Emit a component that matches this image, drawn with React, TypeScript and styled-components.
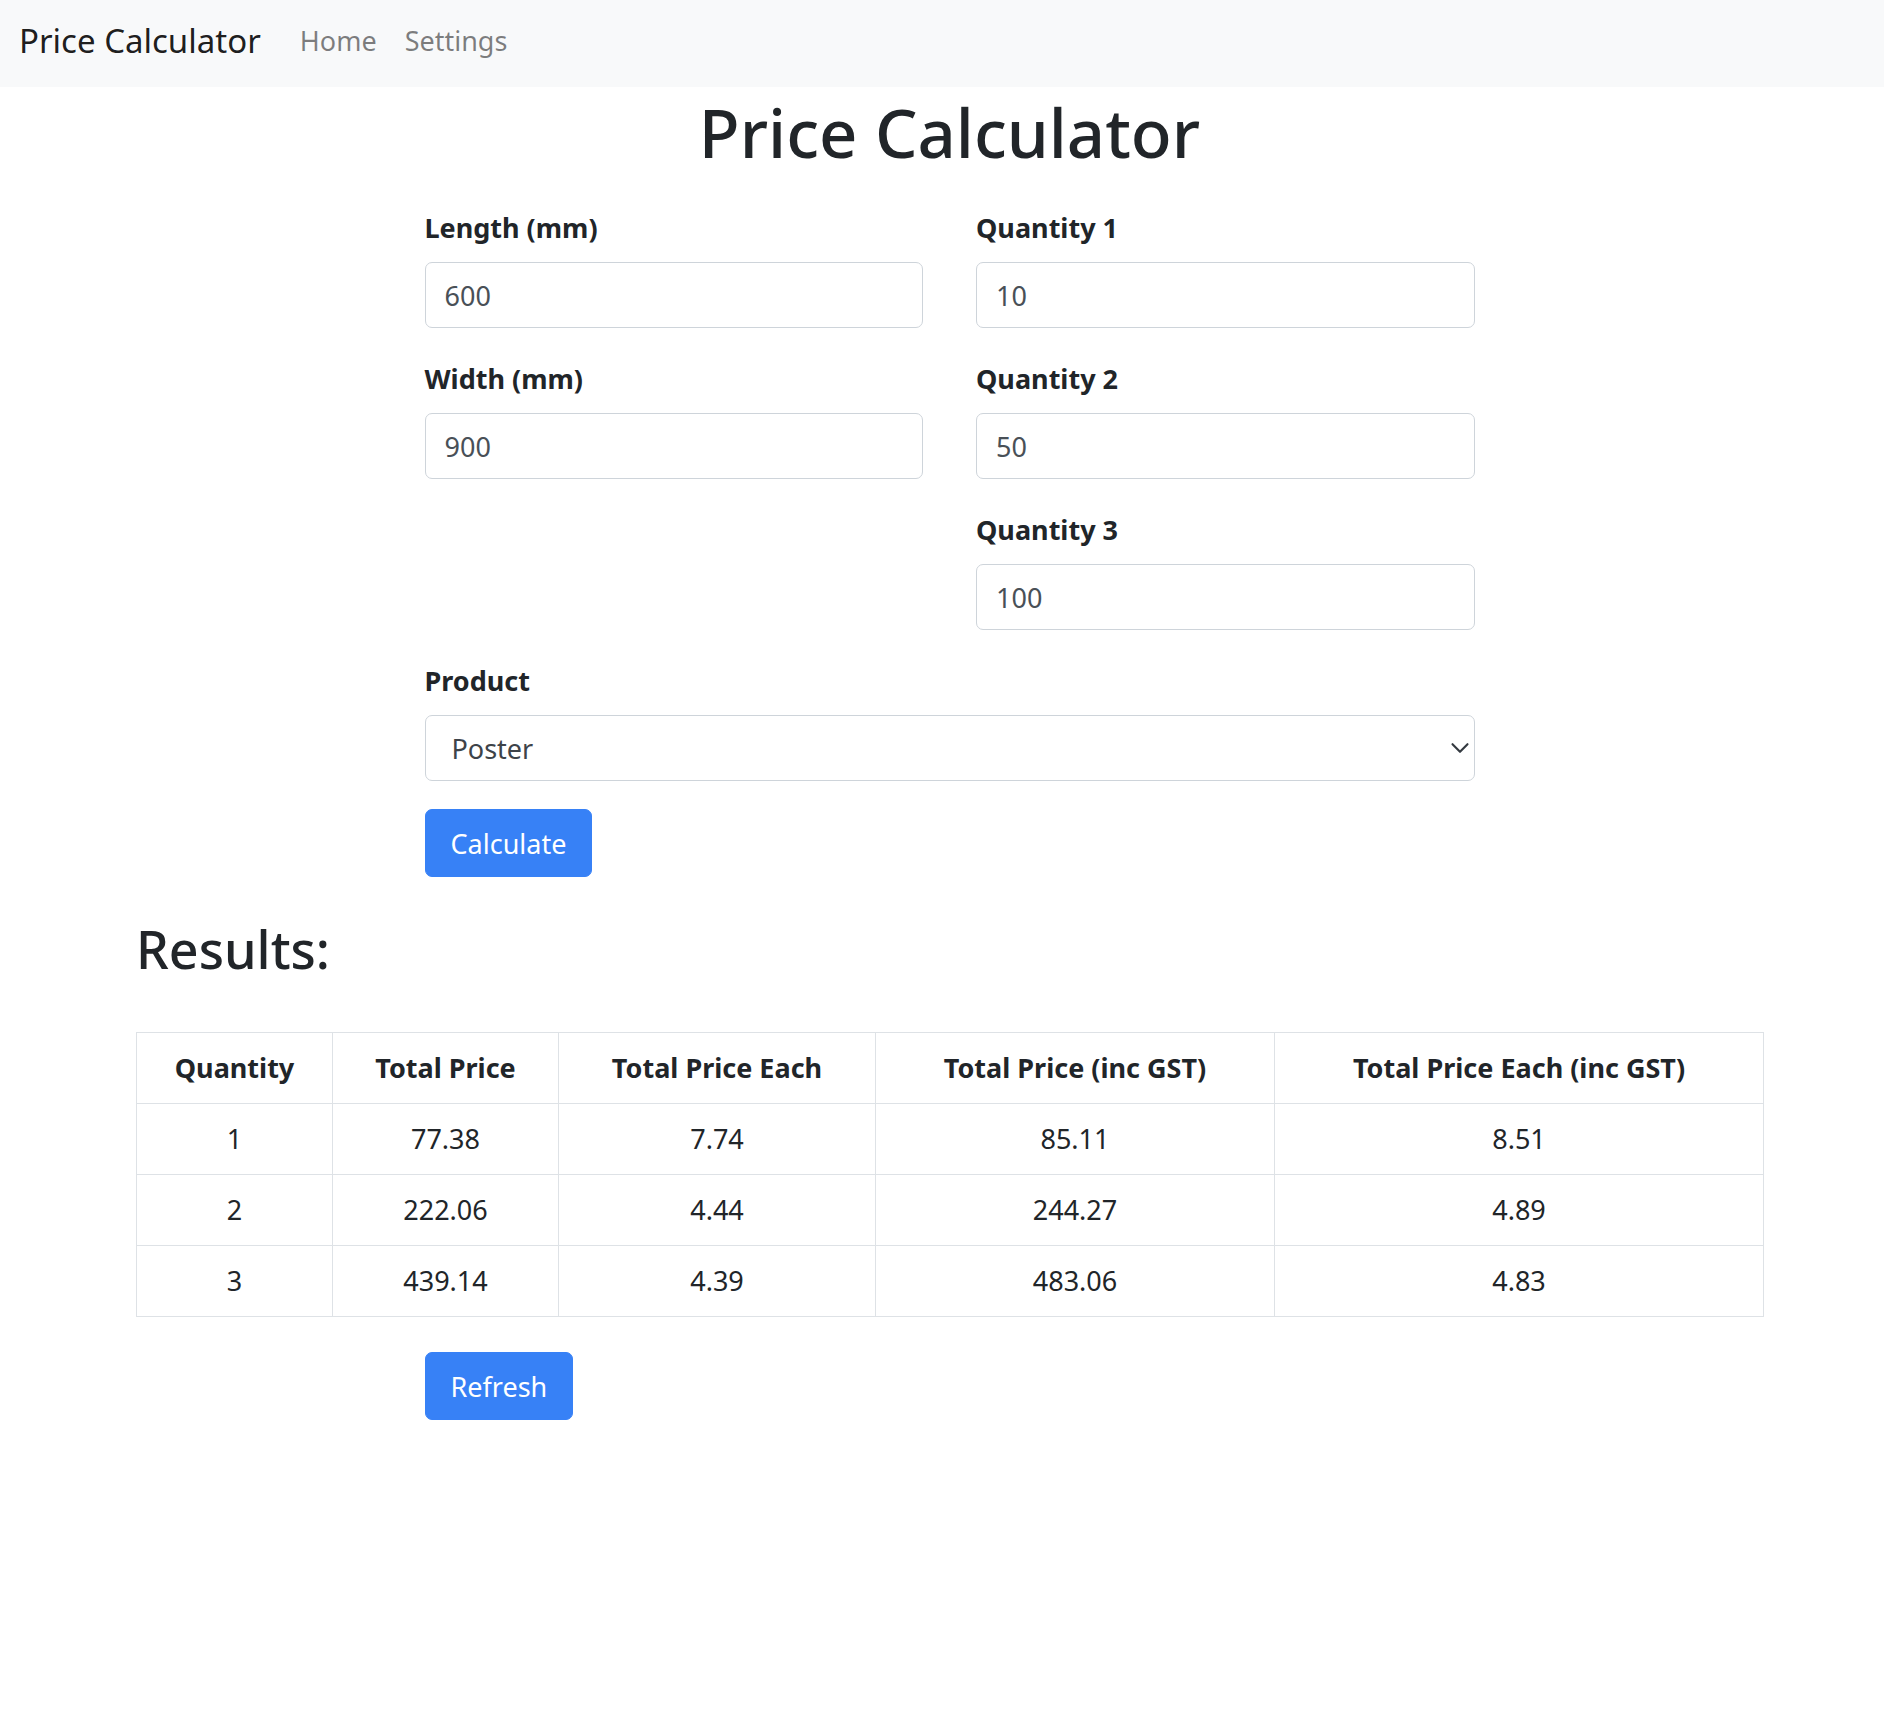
import React from "react";
import styled, { createGlobalStyle } from "styled-components";

const GlobalStyle = createGlobalStyle`
  *, *::before, *::after { box-sizing: border-box; }
  html, body { margin: 0; padding: 0; background: #ffffff; }
  body {
    font-family: "Noto Sans", "Open Sans", sans-serif;
    color: #212529;
    font-size: 27px;
  }
`;

const NavBar = styled.nav`
  height: 87px;
  background: #f8f9fa;
  display: flex;
  align-items: flex-start;
  padding: 0 19px;
`;

const Brand = styled.a`
  font-size: 33px;
  line-height: 1;
  color: rgba(0, 0, 0, 0.9);
  text-decoration: none;
  margin-right: 39px;
  margin-top: 24px;
`;

const NavList = styled.div`
  display: flex;
  gap: 28px;
  margin-top: 27px;
`;

const NavLink = styled.a`
  font-size: 27px;
  line-height: 1;
  color: rgba(0, 0, 0, 0.5);
  text-decoration: none;
`;

const Main = styled.main`
  padding-left: 15px;
`;

const Title = styled.h1`
  margin: 4px 0 33px;
  font-size: 67px;
  line-height: 83px;
  font-weight: 500;
  text-align: center;
  color: #212529;
`;

const FormWrap = styled.div`
  width: 1050px;
  margin: 0 auto;
`;

const Columns = styled.div`
  display: grid;
  grid-template-columns: 1fr 1fr;
  column-gap: 53px;
`;

const Column = styled.div`
  display: flex;
  flex-direction: column;
`;

const Group = styled.div<{ $last?: boolean }>`
  margin-bottom: ${(p) => (p.$last ? "28px" : "30px")};
  position: relative;
`;

const Label = styled.label`
  display: block;
  font-weight: 700;
  font-size: 27px;
  line-height: 42px;
  margin-bottom: 13px;
  color: #212529;
`;

const TextInput = styled.input`
  display: block;
  width: 100%;
  height: 66px;
  padding: 0 19px;
  font-family: inherit;
  font-size: 27px;
  color: #495057;
  background: #fff;
  border: 1px solid #ced4da;
  border-radius: 7px;
  outline: none;
`;

const SelectBox = styled.div`
  position: relative;
`;

const Select = styled.select`
  display: block;
  width: 100%;
  height: 66px;
  padding: 0 40px 0 26px;
  font-family: inherit;
  font-size: 27px;
  color: #3d4349;
  background: #fff;
  border: 1px solid #ced4da;
  border-radius: 7px;
  appearance: none;
  -webkit-appearance: none;
  outline: none;
`;

const Chevron = styled.svg`
  position: absolute;
  right: 5px;
  top: 50%;
  transform: translateY(-50%);
  pointer-events: none;
`;

const Button = styled.button`
  height: 68px;
  padding: 0 25px;
  font-family: inherit;
  font-size: 27px;
  line-height: 1;
  color: #ffffff;
  background: #3781f6;
  border: 1px solid #3781f6;
  border-radius: 7px;
  cursor: pointer;
`;

const ResultsWrap = styled.section`
  width: 1627px;
  margin: 40px auto 0;
`;

const ResultsTitle = styled.h2`
  margin: 0 0 51px;
  font-size: 52px;
  line-height: 64px;
  font-weight: 500;
  color: #212529;
`;

const Table = styled.table`
  width: 100%;
  table-layout: fixed;
  border-collapse: collapse;
  border: 1px solid #dee2e6;
`;

const Th = styled.th`
  border: 1px solid #dee2e6;
  padding: 14px;
  font-size: 27px;
  line-height: 42px;
  font-weight: 700;
  text-align: center;
  color: #212529;
`;

const Td = styled.td`
  border: 1px solid #dee2e6;
  padding: 14px;
  font-size: 27px;
  line-height: 42px;
  text-align: center;
  color: #212529;
`;

const RefreshRow = styled.div`
  width: 1050px;
  margin: 35px auto 0;
  padding-bottom: 60px;
`;

const widths = [196, 226, 317, 399, 489];
const headers = [
  "Quantity",
  "Total Price",
  "Total Price Each",
  "Total Price (inc GST)",
  "Total Price Each (inc GST)",
];
const rows = [
  ["1", "77.38", "7.74", "85.11", "8.51"],
  ["2", "222.06", "4.44", "244.27", "4.89"],
  ["3", "439.14", "4.39", "483.06", "4.83"],
];

const Field: React.FC<{ label: string; value: string }> = ({ label, value }) => (
  <Group>
    <Label>{label}</Label>
    <TextInput type="text" defaultValue={value} />
  </Group>
);

export default function App() {
  return (
    <>
      <GlobalStyle />
      <NavBar>
        <Brand href="#">Price Calculator</Brand>
        <NavList>
          <NavLink href="#">Home</NavLink>
          <NavLink href="#">Settings</NavLink>
        </NavList>
      </NavBar>
      <Main>
        <Title>Price Calculator</Title>
        <FormWrap>
          <Columns>
            <Column>
              <Field label="Length (mm)" value="600" />
              <Field label="Width (mm)" value="900" />
            </Column>
            <Column>
              <Field label="Quantity 1" value="10" />
              <Field label="Quantity 2" value="50" />
              <Field label="Quantity 3" value="100" />
            </Column>
          </Columns>
          <Group $last>
            <Label>Product</Label>
            <SelectBox>
              <Select defaultValue="Poster">
                <option value="Poster">Poster</option>
              </Select>
              <Chevron width="20" height="20" viewBox="0 0 16 16">
                <path
                  d="M2 5l6 6 6-6"
                  fill="none"
                  stroke="#343a40"
                  strokeWidth="1.7"
                  strokeLinecap="round"
                  strokeLinejoin="round"
                />
              </Chevron>
            </SelectBox>
          </Group>
          <Button type="button">Calculate</Button>
        </FormWrap>
        <ResultsWrap>
          <ResultsTitle>Results:</ResultsTitle>
          <Table>
            <colgroup>
              {widths.map((w, i) => (
                <col key={i} style={{ width: w }} />
              ))}
            </colgroup>
            <thead>
              <tr>
                {headers.map((h) => (
                  <Th key={h}>{h}</Th>
                ))}
              </tr>
            </thead>
            <tbody>
              {rows.map((r) => (
                <tr key={r[0]}>
                  {r.map((c, i) => (
                    <Td key={i}>{c}</Td>
                  ))}
                </tr>
              ))}
            </tbody>
          </Table>
        </ResultsWrap>
        <RefreshRow>
          <Button type="button">Refresh</Button>
        </RefreshRow>
      </Main>
    </>
  );
}
